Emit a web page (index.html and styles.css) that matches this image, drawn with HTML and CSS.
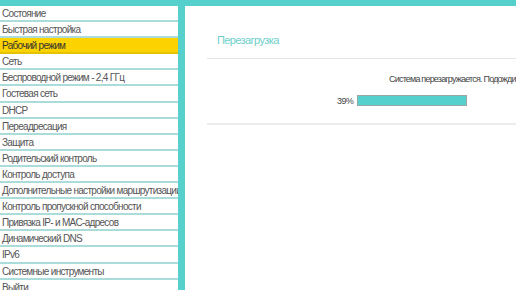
FILE: index.html
```html
<!DOCTYPE html>
<html lang="ru">
<head>
    <meta charset="UTF-8">
    <title>Перезагрузка</title>
    <link rel="stylesheet" href="styles.css">
</head>
<body>
    <div class="page">
        <ul class="menu">
            <li>Состояние</li>
            <li>Быстрая настройка</li>
            <li class="active">Рабочий режим</li>
            <li>Сеть</li>
            <li>Беспроводной режим - 2,4 ГГц</li>
            <li>Гостевая сеть</li>
            <li>DHCP</li>
            <li>Переадресация</li>
            <li>Защита</li>
            <li>Родительский контроль</li>
            <li>Контроль доступа</li>
            <li>Дополнительные настройки маршрутизации</li>
            <li>Контроль пропускной способности</li>
            <li>Привязка IP- и MAC-адресов</li>
            <li>Динамический DNS</li>
            <li>IPv6</li>
            <li>Системные инструменты</li>
            <li>Выйти</li>
        </ul>
        <div class="main">
            <div class="panel">
                <h2 class="title">Перезагрузка</h2>
                <div class="body">
                    <p class="msg">Система перезагружается. Подождите...</p>
                    <div class="progress">
                        <span class="pct">39%</span>
                        <div class="bar"><div class="fill" style="width: 100%"></div></div>
                    </div>
                </div>
            </div>
        </div>
    </div>
</body>
</html>
```

FILE: styles.css
```css
html, body {
    margin: 0;
    height: 100%;
}
body {
    background: #56d0cc;
    font-family: "Liberation Sans", Arial, sans-serif;
    overflow: hidden;
}
.page {
    display: flex;
    gap: 7px;
    padding-top: 6px;
    height: 100%;
    box-sizing: border-box;
}
.menu {
    list-style: none;
    margin: 0;
    padding: 0;
    width: 178px;
    flex-shrink: 0;
    background: #fff;
}
.menu li {
    height: 14.1px;
    line-height: 16px;
    border-bottom: 2px solid #a9dcda;
    padding-left: 2px;
    font-size: 10px;
    letter-spacing: -0.7px;
    color: #555;
    white-space: nowrap;
    overflow: hidden;
}
.menu li.active {
    background: #fcd200;
    border-bottom-color: #e5c300;
    color: #333;
}
.main {
    flex: 1;
    background: #fff;
}
.panel {
    margin-left: 22px;
    padding-top: 26px;
}
.title {
    margin: 0;
    padding-left: 10px;
    font-weight: normal;
    font-size: 11px;
    letter-spacing: -0.6px;
    line-height: 16px;
    color: #6ccfcb;
    height: 26px;
    border-bottom: 1px solid #e4e4e4;
}
.body {
    height: 64px;
    border-bottom: 2px solid #ececec;
}
.msg {
    margin: 0;
    padding: 14px 0 0 182px;
    font-size: 9px;
    letter-spacing: -0.8px;
    line-height: 12px;
    color: #444;
    white-space: nowrap;
}
.progress {
    display: flex;
    align-items: center;
    gap: 4px;
    padding: 10px 0 0 130px;
}
.pct {
    font-size: 9px;
    letter-spacing: -0.6px;
    color: #444;
}
.bar {
    width: 108px;
    height: 9px;
    border: 1px solid #9aa7a7;
}
.fill {
    height: 100%;
    background: #56d0cc;
}
```
